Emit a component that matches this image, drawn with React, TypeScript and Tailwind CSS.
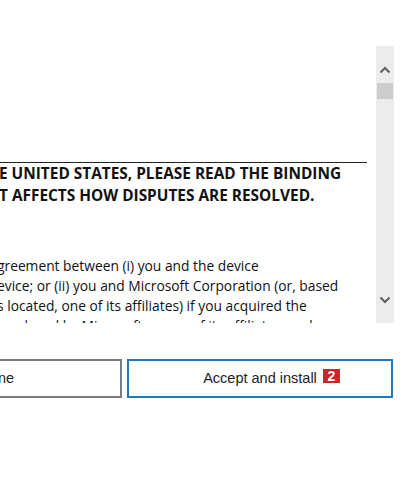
import React from "react";

const sans = { fontFamily: '"Open Sans", "Noto Sans", sans-serif' };
const arial = { fontFamily: '"Liberation Sans", Arial, sans-serif' };

function Chevron({ up }: { up?: boolean }) {
  return (
    <svg width="12" height="8" viewBox="0 0 12 8" className="block">
      <path
        d={up ? "M1.5 6.5 L6 2 L10.5 6.5" : "M1.5 1.5 L6 6 L10.5 1.5"}
        fill="none"
        stroke="#5f5f5f"
        strokeWidth="2"
      />
    </svg>
  );
}

export default function App() {
  return (
    <div className="w-[417px] h-[486px] bg-white overflow-hidden pt-[46px]">
      <div className="flex h-[277px]">
        <div className="w-[376px] h-full overflow-hidden text-[#111]" style={sans}>
          <div className="h-[116px]" />
          <div className="h-px w-[367px] bg-[#222]" />
          <div className="font-bold text-[15.4px] leading-[22px] whitespace-nowrap -ml-[1px]">
            <div>E UNITED STATES, PLEASE READ THE BINDING</div>
            <div>T AFFECTS HOW DISPUTES ARE RESOLVED.</div>
          </div>
          <div className="mt-[49px] text-[13.8px] leading-[20px] whitespace-nowrap -ml-[3px]">
            <div>greement between (i) you and the device</div>
            <div>evice; or (ii) you and Microsoft Corporation (or, based</div>
            <div>s located, one of its affiliates) if you acquired the</div>
            <div>produced by Microsoft or one of its affiliates, and</div>
          </div>
        </div>
        <div className="w-[18px] h-full bg-[#ececec] flex flex-col items-center">
          <div className="mt-[20px]">
            <Chevron up />
          </div>
          <div className="mt-[9px] w-[16px] h-[16px] bg-[#cdcdcd]" />
          <div className="flex-1" />
          <div className="mb-[19px]">
            <Chevron />
          </div>
        </div>
      </div>
      <div className="mt-[36px] flex gap-[5px] h-[39px]" style={arial}>
        <div className="w-[122px] border-2 border-l-0 border-[#7c7c7c] flex items-center text-[14.5px] text-[#222]">
          <span className="-ml-[2px]">ne</span>
        </div>
        <div className="relative w-[266px] border-2 border-[#1e7ac6] flex items-center justify-center text-[14.5px] text-[#222]">
          <span className="relative">
            Accept and install
            <span className="absolute left-[calc(100%+6px)] top-[1px] w-[17px] h-[14px] bg-[#d42027] text-white font-bold text-[14px] leading-[14px] flex items-center justify-center">
              2
            </span>
          </span>
        </div>
      </div>
    </div>
  );
}
